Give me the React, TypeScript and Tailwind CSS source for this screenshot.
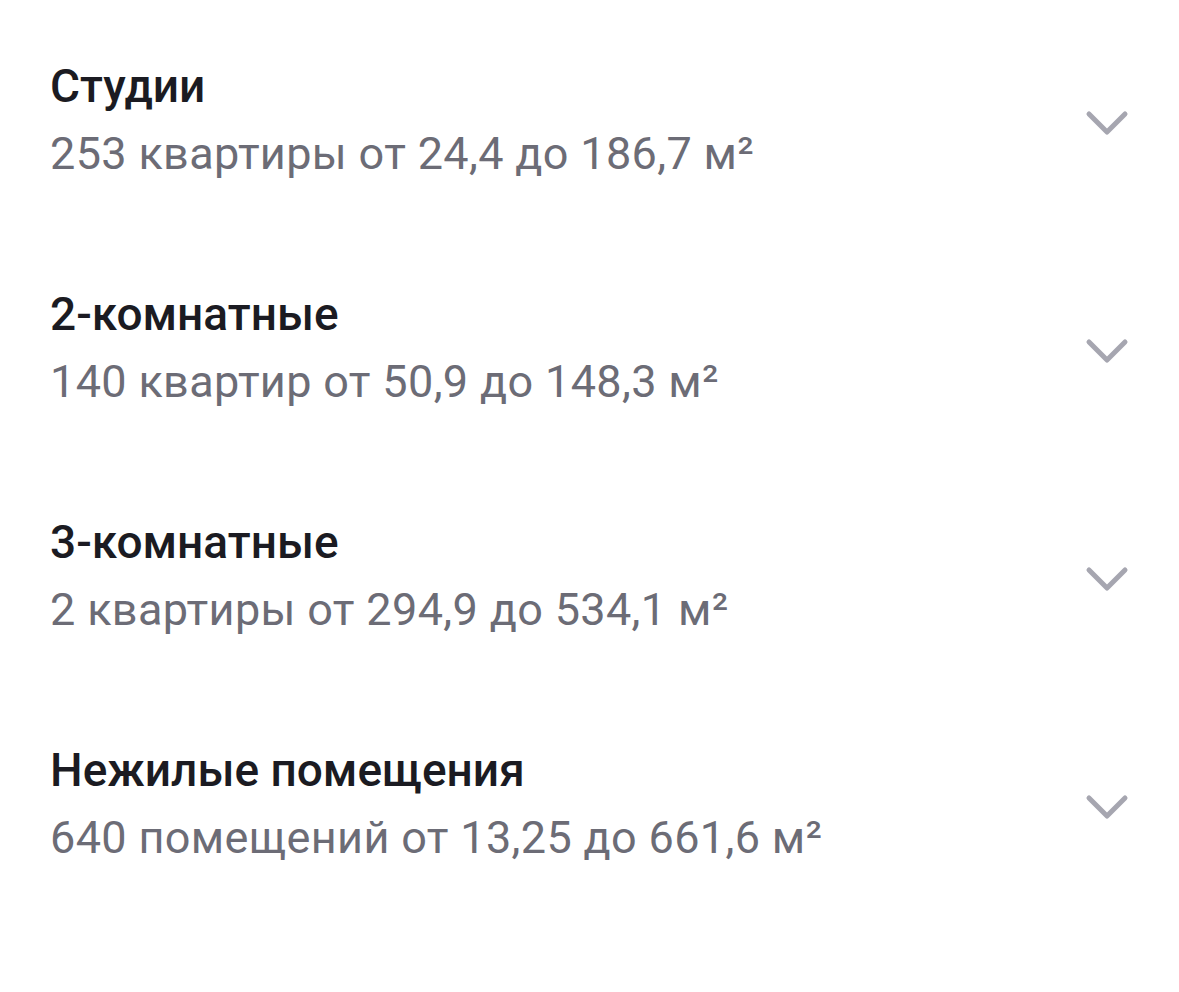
type Item = {
  title: string;
  subtitle: string;
};

const ITEMS: Item[] = [
  { title: "Студии", subtitle: "253 квартиры от 24,4 до 186,7 м²" },
  { title: "2-комнатные", subtitle: "140 квартир от 50,9 до 148,3 м²" },
  { title: "3-комнатные", subtitle: "2 квартиры от 294,9 до 534,1 м²" },
  { title: "Нежилые помещения", subtitle: "640 помещений от 13,25 до 661,6 м²" },
];

function Chevron() {
  return (
    <svg width="44" height="28" viewBox="0 0 44 28" fill="none" className="mr-[50px] mt-[7px] shrink-0">
      <polyline
        points="4,4 22,22 40,4"
        stroke="#a6a6b0"
        strokeWidth="5"
        strokeLinecap="round"
        strokeLinejoin="round"
      />
    </svg>
  );
}

function Row({ item }: { item: Item }) {
  return (
    <button type="button" className="flex h-[228px] w-full items-center justify-between text-left">
      <div className="flex flex-col">
        <div className="text-[46px] font-medium leading-[68px] text-[#1b1b22]">{item.title}</div>
        <div className="text-[45px] leading-[68px] tracking-[0.35px] text-[#6c6c76]">{item.subtitle}</div>
      </div>
      <Chevron />
    </button>
  );
}

export default function App() {
  return (
    <div
      className="min-h-[992px] w-[1179px] bg-white pl-[50px] pt-[6px]"
      style={{ fontFamily: "Roboto, 'Noto Sans', sans-serif" }}
    >
      {ITEMS.map((item) => (
        <Row key={item.title} item={item} />
      ))}
    </div>
  );
}
